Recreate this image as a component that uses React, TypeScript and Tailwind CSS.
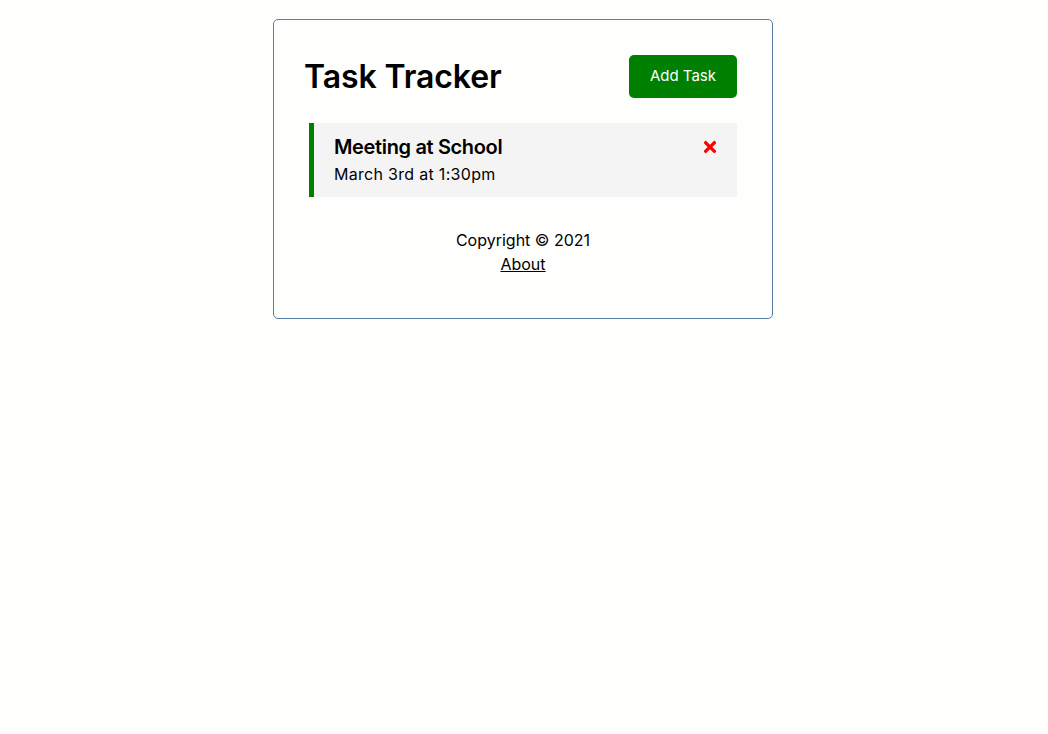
import { FaTimes } from 'react-icons/fa'

export default function App() {
  const tasks = [{ id: 1, text: 'Meeting at School', day: 'March 3rd at 1:30pm', reminder: true }]

  return (
    <div className="min-h-[734px] bg-[#fefefc] pt-[19px] pr-[2px] text-black" style={{ fontFamily: 'Inter, "Noto Sans", sans-serif' }}>
      <div className="mx-auto min-h-[300px] w-[500px] rounded-[5px] border border-[#5a7fa8] p-[30px]">
        <header className="mb-5 flex items-center justify-between">
          <h1 className="text-[32px] font-semibold leading-[48px] tracking-[-0.1px]">Task Tracker</h1>
          <button className="m-[5px] h-[43px] rounded-[5px] bg-[#008000] px-[21px] text-[15px] text-white">Add Task</button>
        </header>

        {tasks.map((task) => (
          <div
            key={task.id}
            className={`mx-[5px] bg-[#f4f4f4] pt-[9px] pb-[11px] pr-[18px] pl-5 ${task.reminder ? 'border-l-[5px] border-[#008000]' : ''}`}
          >
            <h3 className="flex items-center justify-between text-[20px] font-semibold leading-[30px] tracking-[-0.35px]">
              {task.text}
              <FaTimes className="text-[18px] text-[#ff0000]" />
            </h3>
            <p className="text-[16px] leading-6 tracking-[0.3px]">{task.day}</p>
          </div>
        ))}

        <footer className="mt-[30px] pt-px text-center text-[16px] leading-6">
          <p>Copyright &copy; 2021</p>
          <a href="#" className="underline">About</a>
        </footer>
      </div>
    </div>
  )
}
